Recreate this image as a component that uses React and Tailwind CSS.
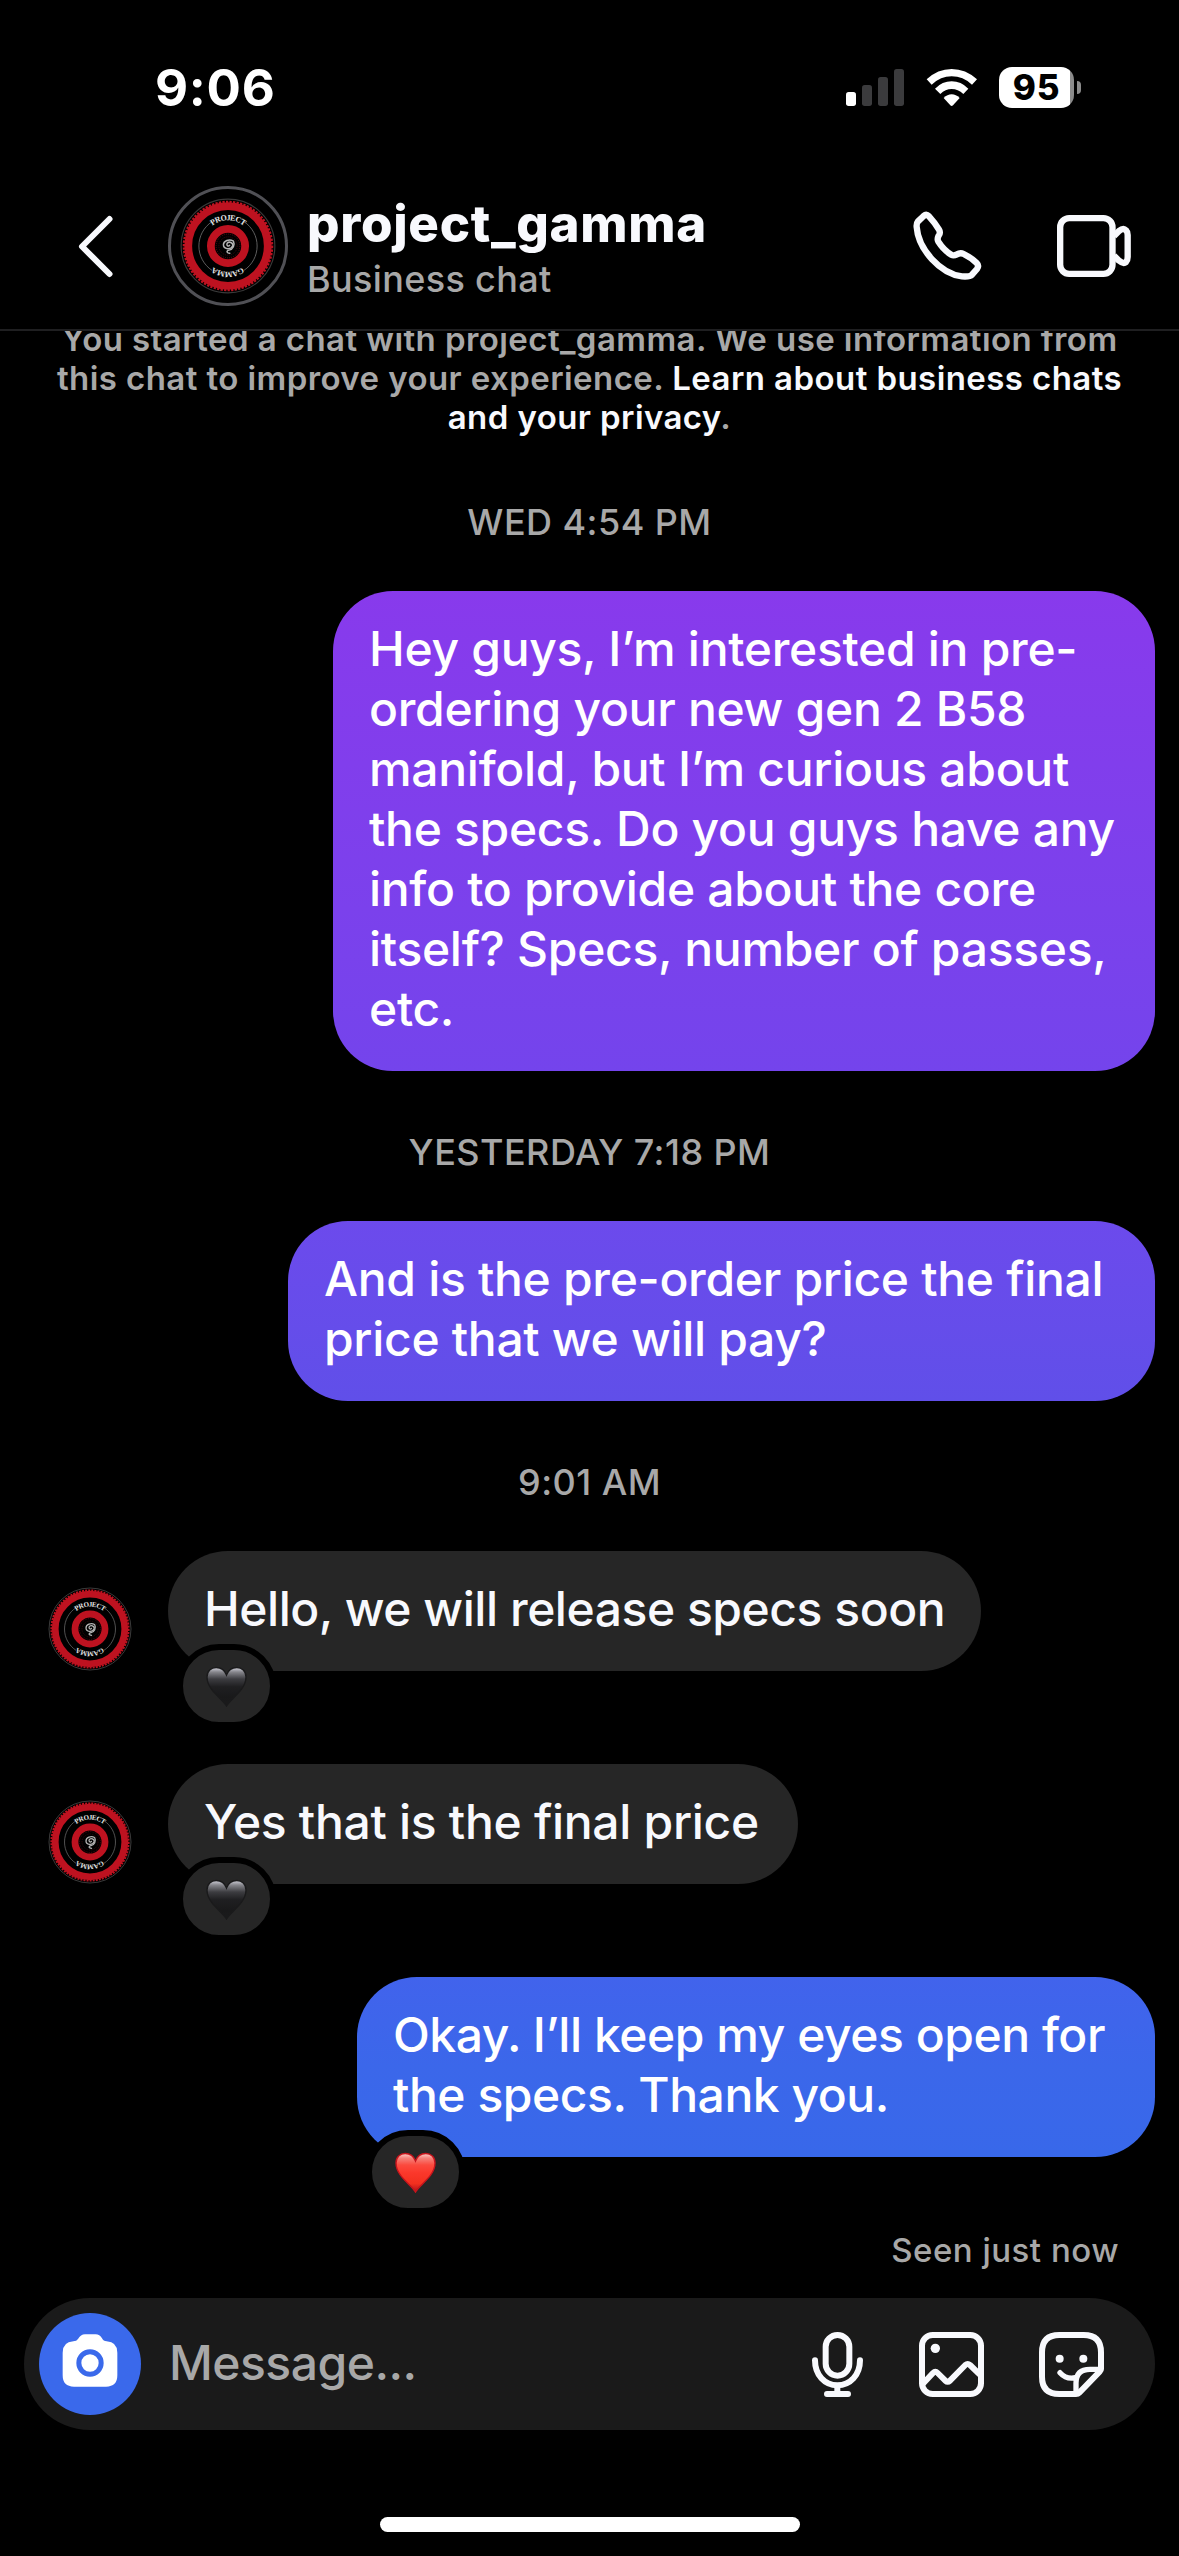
import React, { useId } from 'react';
import clsx from 'clsx';

const messages = [
  { type: 'time', text: 'WED 4:54 PM' },
  {
    type: 'sent',
    text: 'Hey guys, I’m interested in pre-\nordering your new gen 2 B58\nmanifold, but I’m curious about\nthe specs. Do you guys have any\ninfo to provide about the core\nitself? Specs, number of passes,\netc.',
    className: 'w-[822px] from-[#883aec] to-[#7444ec] tracking-[-0.3px]',
  },
  { type: 'time', text: 'YESTERDAY 7:18 PM' },
  {
    type: 'sent',
    text: 'And is the pre-order price the final\nprice that we will pay?',
    className: 'w-[867px] from-[#6c4aec] to-[#604fe9] tracking-[-0.31px]',
  },
  { type: 'time', text: '9:01 AM' },
  {
    type: 'received',
    text: 'Hello, we will release specs soon',
    className: 'w-[813px] tracking-[-0.46px]',
    reaction: 'black',
  },
  {
    type: 'received',
    text: 'Yes that is the final price',
    className: 'w-[630px] tracking-[-0.3px]',
    reaction: 'black',
  },
  {
    type: 'sent',
    text: 'Okay. I’ll keep my eyes open for\nthe specs. Thank you.',
    className: 'w-[798px] from-[#4163ec] via-[#3b67ea] to-[#3868ea] tracking-[-0.46px]',
    reaction: 'red',
  },
];

const Avatar = ({ className }) => {
  const id = useId();
  return (
    <svg viewBox="0 0 84 84" className={className}>
      <defs>
        <path id={id} d="M19.5 42 A22.5 22.5 0 0 1 64.5 42" />
      </defs>
      <circle cx="42" cy="42" r="41" fill="#000" stroke="#3a3a3a" strokeWidth="1" />
      <circle cx="42" cy="42" r="38.6" fill="none" stroke="#be1220" strokeWidth="2" strokeDasharray="2 1.1" />
      <circle cx="42" cy="42" r="34.8" fill="none" stroke="#be1220" strokeWidth="6.8" />
      <path d="M28 20.7 A25.5 25.5 0 0 0 28 63.3 M56 20.7 A25.5 25.5 0 0 1 56 63.3" fill="none" stroke="#666" strokeWidth="0.8" />
      <circle cx="42" cy="42" r="15" fill="none" stroke="#be1220" strokeWidth="6.8" />
      <circle cx="42" cy="42" r="10.4" fill="none" stroke="#6b0c15" strokeWidth="0.8" strokeDasharray="0.8 1" />
      <circle cx="42" cy="42" r="8" fill="none" stroke="#4a0a10" strokeWidth="0.8" strokeDasharray="0.8 1" />
      <g fill="none" stroke="#b5b5b5" strokeWidth="1.3" strokeLinecap="round">
        <path d="M46.5 37.5 C43 35.5 38 37.5 38 41 C38 45 44.5 45.5 46 42 C47 39 42.5 37.5 41.2 39.8 C40.4 41.6 42.4 42.8 43.4 41.4" />
        <path d="M46.8 38 C48.2 41 46.5 45 43 45.6 C41 46 40.5 47.2 42 48 L43.5 48.4" />
      </g>
      <g fill="#e6e6e6" fontSize="7" letterSpacing="-0.5" className="font-['Liberation_Serif',serif] font-bold" textAnchor="middle">
        <text>
          <textPath href={`#${id}`} startOffset="50%">PROJECT</textPath>
        </text>
        <text transform="rotate(180 42 42)">
          <textPath href={`#${id}`} startOffset="50%">GAMMA</textPath>
        </text>
      </g>
    </svg>
  );
};

const Heart = ({ color }) => {
  const id = useId();
  const red = color === 'red';
  return (
    <svg viewBox="0 0 41 41" className="w-[41px] h-[41px]">
      <defs>
        <linearGradient id={id} x1="0" y1="0" x2="0" y2="1">
          <stop offset="0" stopColor={red ? '#ffd0cc' : '#d2d2dc'} />
          <stop offset="0.12" stopColor={red ? '#f5837c' : '#85858b'} />
          <stop offset="0.3" stopColor={red ? '#fb4a3e' : '#3c3c40'} />
          <stop offset="0.5" stopColor={red ? '#fb382b' : '#1f1f21'} />
          <stop offset="0.78" stopColor={red ? '#f3301f' : '#19191a'} />
          <stop offset="1" stopColor={red ? '#b0101a' : '#1b1b1c'} />
        </linearGradient>
      </defs>
      <path
        d="M20.5 40 C17.5 33.5 1 24.5 1 11 C1 5 5.2 1.5 10.2 1.5 C15 1.5 18.8 4.5 20.5 9 C22.2 4.5 26 1.5 30.8 1.5 C35.8 1.5 40 5 40 11 C40 24.5 23.5 33.5 20.5 40Z"
        fill={`url(#${id})`}
        stroke={red ? '#c8141c' : '#1a1a1b'}
        strokeWidth="1.4"
      />
    </svg>
  );
};

const Reaction = ({ color }) => (
  <div className="absolute left-[9px] -bottom-[57px] flex h-[84px] w-[99px] items-center justify-center rounded-full border-[6px] border-black bg-[#262626]">
    <Heart color={color} />
  </div>
);

const Bubble = ({ message }) => (
  <div
    className={clsx(
      'relative whitespace-pre rounded-[60px] px-9 pt-[28px] pb-[32px] text-[48px] leading-[60px] font-medium',
      message.type === 'sent' ? 'bg-linear-to-b text-white' : 'bg-[#262626] text-[#f8f9fd]',
      message.className
    )}
  >
    {message.text}
    {message.reaction && <Reaction color={message.reaction} />}
  </div>
);

const Message = ({ message }) => {
  if (message.type === 'time') {
    return (
      <p className="mb-12 text-center text-[36px] leading-[42px] font-medium tracking-[0.45px] text-[#a8a8a8]">
        {message.text}
      </p>
    );
  }
  return (
    <div
      className={clsx(
        'flex items-end',
        message.type === 'sent' ? 'justify-end pr-6' : 'gap-9 pl-12',
        message.reaction ? 'mb-[93px]' : 'mb-[60px]'
      )}
    >
      {message.type === 'received' && <Avatar className="size-[84px] shrink-0" />}
      <Bubble message={message} />
    </div>
  );
};

const StatusBar = () => (
  <div className="flex h-[163px] shrink-0 items-start justify-between pt-[57px] pr-[98px] pl-[155px]">
    <span className="text-[51px] leading-[61px] font-bold tracking-[0.7px]">9:06</span>
    <div className="flex items-center pt-[10px]">
      <svg viewBox="198 111 174 123" className="h-[41px] w-[58px]">
        <rect x="198" y="186" width="30" height="42" rx="8" fill="#fff" />
        <g fill="#3b3b3d">
          <rect x="246" y="165" width="30" height="63" rx="8" />
          <rect x="294" y="141" width="30" height="87" rx="8" />
          <rect x="342" y="117" width="30" height="111" rx="8" />
        </g>
      </svg>
      <svg viewBox="438 111 156 123" className="ml-[22px] h-[41px] w-[52px]" fill="#fff">
        <path d="M440 148 Q473 117 515 117 Q557 117 591 148 L576 164 Q549 139 515 139 Q482 139 455 164Z" />
        <path d="M465 176 Q487 154 515 154 Q543 154 565 176 L550 192 Q534 177 515 177 Q496 177 481 192Z" />
        <path d="M491 204 Q502 193 515 193 Q528 193 539 204 L519 226 Q515 230 511 226Z" />
      </svg>
      <div className="ml-[21px] flex h-[41px] w-[75px] items-center justify-center overflow-hidden rounded-[13px] bg-linear-to-r from-white from-[95%] to-[#8b8b8b] to-[95%] text-[35px] leading-[41px] font-extrabold tracking-[0.8px] text-black">
        95
      </div>
      <div className="ml-[3px] h-[13px] w-1 rounded-r-full bg-[#8b8b8b]" />
    </div>
  </div>
);

const Header = () => (
  <header className="flex h-[168px] shrink-0 items-center border-b-2 border-[#1f1f21] pl-[76px] pr-[46px]">
    <svg viewBox="0 0 40 64" className="h-16 w-10" fill="none" stroke="#f8f9fd" strokeWidth="6" strokeLinecap="round" strokeLinejoin="round">
      <path d="M33.5 5 L6 32.5 L33.5 60" />
    </svg>
    <div className="ml-[52px] flex size-[120px] items-center justify-center rounded-full border-[3px] border-[#505055]">
      <Avatar className="size-24" />
    </div>
    <div className="ml-[19px] flex-1 pt-1.5">
      <h1 className="text-[51px] leading-[57px] font-extrabold tracking-[0.7px] text-[#f8f9fd]">project_gamma</h1>
      <p className="pt-0.5 text-[36px] leading-[50px] font-medium tracking-[0.35px] text-[#a8a8a8]">Business chat</p>
    </div>
    <svg viewBox="398 540 210 210" className="size-[70px]" fill="none" stroke="#f8f9fd" strokeWidth="19" strokeLinejoin="round">
      <path d="M413 571 L430 555 Q438 548 446 556 C458 569 468 582 476 596 Q482 606 474 616 Q470 625 474 632 C484 648 497 662 514 672 Q520 675 530 670 Q540 664 550 669 C564 676 578 685 589 696 Q597 704 590 714 L575 731 Q568 738 545 736 C480 728 414 655 409 588 Q408 577 413 571Z" />
    </svg>
    <svg viewBox="828 540 231 210" className="ml-[73px] h-[70px] w-[77px]" fill="none" stroke="#f8f9fd" strokeWidth="19" strokeLinejoin="round">
      <rect x="840.5" y="561.5" width="157" height="167" rx="27" />
      <path d="M1002 615 L1017 600 Q1030 589 1038 598 Q1043 603 1043 612 V678 Q1043 688 1038 693 Q1030 700 1017 689 L1002 674" />
    </svg>
  </header>
);

const Composer = () => (
  <div className="mx-6 flex h-[132px] shrink-0 items-center rounded-full bg-[#1a1a1a] pl-[15px] pr-[51px]">
    <div className="flex size-[102px] items-center justify-center rounded-full bg-[#3a69eb]">
      <svg viewBox="118 99 306 306" className="size-[102px]">
        <path d="M221 184 Q231 184 235 177 Q243 163 256 163 H288 Q300 163 307 175 Q311 184 321 184 Q353 186 353 218 V286 Q353 320 319 320 H223 Q189 320 189 286 V218 Q189 186 221 184Z" fill="#fff" />
        <circle cx="271" cy="249" r="33.5" fill="none" stroke="#3a69eb" strokeWidth="15" />
      </svg>
    </div>
    <span className="ml-[28px] flex-1 pb-0.5 text-[48px] leading-[60px] tracking-[-0.5px] text-[#a8a8a8] font-medium">Message...</span>
    <svg viewBox="96 153 153 195" className="h-[65px] w-[51px]" fill="none" stroke="#f8f9fd" strokeWidth="18" strokeLinecap="round">
      <rect x="137" y="162" width="71" height="122" rx="35.5" />
      <path d="M105 238 C105 282 134 313 172 313 C211 313 240 282 240 238 M172 313 V338 M141 339 H204" />
    </svg>
    <svg viewBox="417 153 195 195" className="ml-[56px] size-[65px]" fill="none" stroke="#f8f9fd" strokeWidth="18" strokeLinejoin="round">
      <rect x="426" y="162" width="177" height="177" rx="32" />
      <path d="M428 309 L459 276 Q466 269 473 276 L496 299 Q503 305 510 299 L556 252 Q563 246 570 252 L602 283" />
      <circle cx="466" cy="202" r="14" fill="#f8f9fd" stroke="none" />
    </svg>
    <svg viewBox="777 153 195 195" className="ml-[55px] size-[65px]" fill="none" stroke="#f8f9fd" strokeWidth="18" strokeLinecap="round" strokeLinejoin="round">
      <path d="M888 339 H838 Q786 339 786 287 V214 Q786 162 838 162 H911 Q963 162 963 214 V264 Q963 268 959 272 L898 335 Q894 339 888 339Z" />
      <path d="M888 333 V306 Q888 265 930 265 H959 M840 275 Q859 296 886 290" strokeWidth="16" />
      <circle cx="839" cy="233" r="12" fill="#f8f9fd" stroke="none" />
      <circle cx="910" cy="233" r="12" fill="#f8f9fd" stroke="none" />
    </svg>
  </div>
);

export default function App() {
  return (
    <div className="flex h-[2556px] w-[1179px] flex-col overflow-hidden bg-black font-['Inter','Liberation_Sans',sans-serif] text-white">
      <StatusBar />
      <Header />
      <main className="h-[1967px] shrink-0 overflow-hidden">
        <div className="-mt-[11px]">
          <p className="mb-[64px] whitespace-pre text-center text-[33px] leading-[39px] font-semibold tracking-[0.42px] text-[#a8a8a8]">
            {'You started a chat with project_gamma. We use information from\nthis chat to improve your experience. '}
            <span className="text-[#f8f9fd]">{'Learn about business chats\nand your privacy'}</span>.
          </p>
          {messages.map((message) => (
            <Message key={message.text} message={message} />
          ))}
          <p className="-mt-[19px] pr-[60px] text-right text-[33px] leading-[39px] font-medium tracking-[0.5px] text-[#a8a8a8]">
            Seen just now
          </p>
        </div>
      </main>
      <Composer />
      <div className="mx-auto mt-[87px] h-[15px] w-[420px] shrink-0 rounded-full bg-white" />
    </div>
  );
}
